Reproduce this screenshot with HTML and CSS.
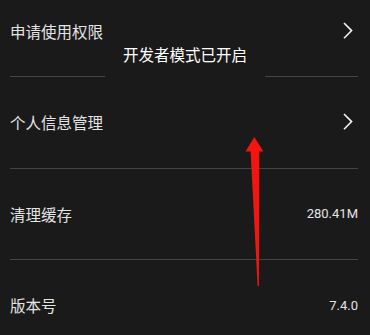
FILE: index.html
```html
<!DOCTYPE html>
<html lang="zh">
<head>
<meta charset="utf-8">
<link rel="stylesheet" href="styles.css">
</head>
<body>
<div class="screen">
  <div class="list">
    <div class="row">
      <span class="label">申请使用权限</span>
      <svg class="chev" width="10" height="18" viewBox="0 0 10 18"><polyline points="1,1 8.6,8.6 1,16.2" fill="none" stroke="#f2f2f2" stroke-width="1.6"/></svg>
    </div>
    <div class="row">
      <span class="label">个人信息管理</span>
      <svg class="chev" width="10" height="18" viewBox="0 0 10 18"><polyline points="1,1 8.6,8.6 1,16.2" fill="none" stroke="#f2f2f2" stroke-width="1.6"/></svg>
    </div>
    <div class="row">
      <span class="label">清理缓存</span>
      <span class="value">280.41M</span>
    </div>
    <div class="row last">
      <span class="label">版本号</span>
      <span class="value">7.4.0</span>
    </div>
  </div>
  <div class="toast">开发者模式已开启</div>
  <svg class="arrow" width="370" height="335" viewBox="0 0 370 335">
    <polygon points="254.3,137 245.5,151.5 250.6,151.5 257.6,286 258.9,286 259.3,151.5 263.4,151.5" fill="#f5150f"/>
  </svg>
</div>
</body>
</html>
```
FILE: styles.css
```css
html, body {
  margin: 0;
  padding: 0;
  background: #1a1a1a;
}
.screen {
  position: relative;
  width: 370px;
  height: 335px;
  overflow: hidden;
  background: #1a1a1a;
  font-family: "Noto Sans CJK SC", "Noto Sans", sans-serif;
}
.list {
  margin-top: -14.5px;
}
.row {
  height: 90.5px;
  margin: 0 12px 0 10px;
  border-bottom: 1px solid #444444;
  display: flex;
  align-items: center;
  justify-content: space-between;
}
.row.last {
  border-bottom: none;
}
.label {
  font-size: 15.5px;
  color: #e4e4e4;
  line-height: 20px;
}
.value {
  font-family: Roboto, "Noto Sans", sans-serif;
  font-size: 13px;
  color: #e4e4e4;
}
.chev {
  margin-right: 5px;
  display: block;
}
.toast {
  position: absolute;
  left: 105px;
  top: 28px;
  width: 160px;
  height: 52px;
  background: #1a1a1a;
  color: #ffffff;
  font-size: 15.5px;
  line-height: 52px;
  text-align: center;
}
.arrow {
  position: absolute;
  left: 0;
  top: 0;
}
```
